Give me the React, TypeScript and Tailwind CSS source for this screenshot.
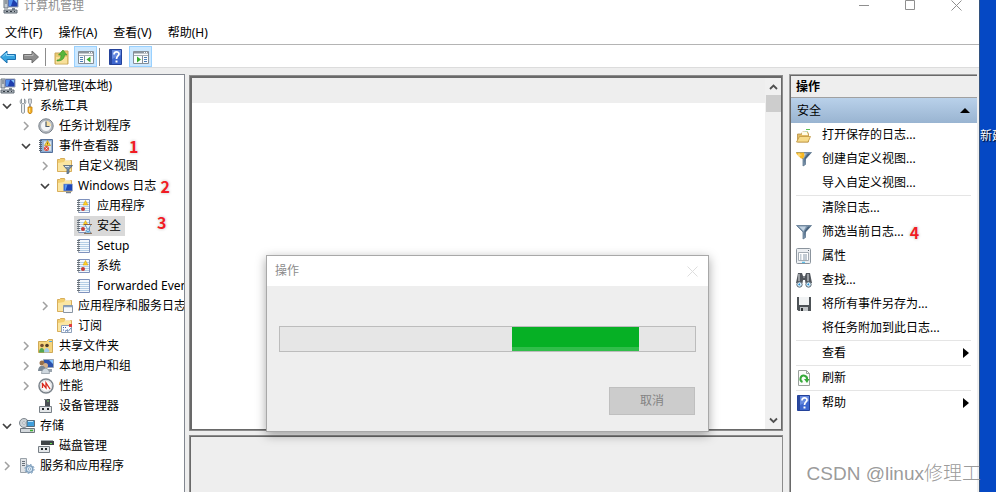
import type { ReactNode } from "react";
import clsx from "clsx";

function Icon({ children, size = 16 }: { children: ReactNode; size?: number }) {
  return (
    <svg width={size} height={size} viewBox="0 0 16 16" fill="none" className="shrink-0" aria-hidden="true">
      {children}
    </svg>
  );
}

function ComputerIcon() {
  return (
    <Icon>
      <path d="M1 1h4v9H1z" fill="#c9ced3" stroke="#6c7680" />
      <path d="M2 3h2M2 5h2" stroke="#5b656f" />
      <path d="M5 1h10v8H5z" fill="#1f3fae" stroke="#9aa6b4" />
      <path d="M6 2h4L8 8H6z" fill="#4f8ff0" />
      <path d="M11 2h3v3z" fill="#86c5ff" />
      <path d="M9 10h3v2H9z" fill="#7c8894" />
      <path d="M1 12h13v3H1z" fill="#aab1b8" stroke="#626c76" />
      <path d="M3 13.500h2M7 13.500h2M11 13.500h1" stroke="#333c45" />
    </Icon>
  );
}

function ToolsIcon() {
  return (
    <Icon>
      <path
        d="M2.500 1v4l1.500 1 1.500-1V1C7 2 7.500 4.500 5.500 6.500v8c-.5 1-2.500 1-3 0v-8C.5 4.500 1 2 2.500 1z"
        fill="#eceff1"
        stroke="#858c93"
        strokeWidth=".9"
      />
      <path d="M9.500 1h3v4l-1 1v3h-1V6l-1-1z" fill="#d5d9dd" stroke="#8b9299" strokeWidth=".8" />
      <path d="M9 9h4v5l-1 1.500h-2L9 14z" fill="#f4b32b" stroke="#c27d0e" strokeWidth=".8" />
      <path d="M10.500 10v4" stroke="#ffe08a" />
    </Icon>
  );
}

function ClockIcon() {
  return (
    <Icon>
      <circle cx="8" cy="8" r="7.200" fill="#b9bec4" stroke="#777f88" />
      <circle cx="8" cy="8" r="5.500" fill="#f4f6f8" stroke="#969ea6" strokeWidth=".6" />
      <path d="M8 8V3a5 5 0 0 1 5 5z" fill="#f7dfa4" />
      <path d="M8 3.500V8.500h3.500" stroke="#4a5a6c" strokeWidth="1.200" />
    </Icon>
  );
}

function NotebookIcon() {
  return (
    <Icon>
      <path d="M2.500 1.500h12v13h-12z" fill="#8fb0d6" stroke="#54709a" />
      <path d="M5.500 3h8v10h-8z" fill="#dbe7f3" stroke="#8ea7c6" strokeWidth=".6" />
      <path d="M1 2.500h3M1 4.500h3M1 6.500h3M1 8.500h3M1 10.500h3M1 12.500h3" stroke="#59636e" />
      <path d="M9.500 2.500l3 5h-6z" fill="#ffd338" stroke="#b98a10" strokeWidth=".6" />
      <path d="M9.500 4.500v2" stroke="#5a4408" strokeWidth=".8" />
      <circle cx="8.500" cy="10.500" r="2.500" fill="#dd4a3e" />
      <path d="M7.500 9.500l2 2M9.500 9.500l-2 2" stroke="#fff" strokeWidth=".7" />
    </Icon>
  );
}

function FolderBase() {
  return (
    <>
      <path d="M.5 13.500v-12h2l1-1h4l1 2h6v11z" fill="#f3cf70" stroke="#cfa044" strokeWidth=".8" />
      <path d="M1 13V5l6-1 1-1.500h6V13z" fill="#fbe6a2" />
      <path d="M8 2h5" stroke="#fff" />
    </>
  );
}

function FolderFilterIcon() {
  return (
    <Icon>
      <FolderBase />
      <path d="M6.500 7.500h9l-3.500 4v3.500l-2 1v-4.500z" fill="#7b93ac" stroke="#44586e" strokeWidth=".7" />
      <path d="M8 8.500h4" stroke="#dce7f2" />
    </Icon>
  );
}

function FolderMonitorIcon() {
  return (
    <Icon>
      <FolderBase />
      <path d="M6.500 6h9v7h-9z" fill="#1d46b8" stroke="#a6b3c4" strokeWidth=".7" />
      <path d="M7.500 6.500h3l-2 6h-1z" fill="#5b9bf2" />
      <path d="M9 14.500h5" stroke="#76818c" strokeWidth="1.500" />
    </Icon>
  );
}

function FolderWindowIcon() {
  return (
    <Icon>
      <FolderBase />
      <path d="M6.500 7.500h9v7h-9z" fill="#f6f8fa" stroke="#8995a3" />
      <path d="M6.500 8.500h9" stroke="#8aa4c2" strokeWidth="1.500" />
    </Icon>
  );
}

function SubscriptionIcon() {
  return (
    <Icon>
      <FolderBase />
      <path d="M4.500 7.500h10v7h-10z" fill="#fafcff" stroke="#8ea0b8" />
      <path d="M6 9.500h1M8 9.500h1M6 12h1M8 13h1M10 12h1" stroke="#3d62a8" />
      <path d="M12 6h3v3h-3z" fill="#e03e3e" />
      <path d="M9 12l2 1.500L14 10" stroke="#4d6e9a" strokeWidth=".8" />
    </Icon>
  );
}

function LogIcon({ marks, busy }: { marks?: boolean; busy?: boolean }) {
  return (
    <Icon>
      <path d="M2.500 1.500h11v13h-11z" fill="#f4f8fd" stroke="#7f92bd" />
      <path d="M4 4.500h9M4 6.500h9M4 8.500h9M4 10.500h9M4 12.500h9" stroke="#a3c3e0" strokeWidth=".8" />
      <path d="M2.500 1v14" stroke="#a3abb3" />
      <path d="M1 2.500h3M1 4.500h3M1 6.500h3M1 8.500h3M1 10.500h3M1 12.500h3" stroke="#69727c" />
      {marks && <path d="M9.500 2.500l2.500 4.500H7z" fill="#ffd029" stroke="#d19a0a" strokeWidth=".5" />}
      {marks && <circle cx="7" cy="11" r="2" fill="#c63b36" />}
      {busy && (
        <>
          <path d="M9 6.500h6l-2.500 4.500L15 15.500H9l2.500-4.500z" fill="#e5f5ff" stroke="#4b86b8" strokeWidth=".8" />
          <path d="M8 6.500h8M8 15.300h8" stroke="#8b6446" />
          <path d="M10 14.500l2-2 2 2z" fill="#459bdc" />
        </>
      )}
    </Icon>
  );
}

function SharedIcon() {
  return (
    <Icon>
      <path d="M.5 14.500v-11h8l2-2h4v13z" fill="#f5d57d" stroke="#caa14b" strokeWidth=".9" />
      <path d="M11 3.500h3" stroke="#4fa7df" />
      <circle cx="4" cy="7.500" r="1.800" fill="#765030" />
      <circle cx="9" cy="7.500" r="1.800" fill="#4f3a28" />
      <path d="M1 14.500c0-6 5.500-6 5.500 0z" fill="#53a653" />
      <path d="M6 14.500c0-6 5.500-6 5.500 0z" fill="#a2cce9" />
    </Icon>
  );
}

function UsersIcon() {
  return (
    <Icon>
      <path d="M5.500 1.500h10v8h-10z" fill="#2b52ad" stroke="#9aa6b4" />
      <path d="M11 2h4v4z" fill="#86c5ff" />
      <path d="M9 11h5v3H9z" fill="#9aa4ae" />
      <circle cx="4" cy="5" r="2.500" fill="#98704a" />
      <circle cx="7.500" cy="7.500" r="2.500" fill="#d6b18a" />
      <path d="M0 13c0-7 8-7 8 0z" fill="#7b8894" />
      <path d="M3.500 15.500c0-7 8-7 8 0z" fill="#cfd8df" stroke="#75818c" strokeWidth=".6" />
    </Icon>
  );
}

function PerformanceIcon() {
  return (
    <Icon>
      <circle cx="8" cy="8" r="7" fill="#fdfdfd" stroke="#7b838b" strokeWidth="1.500" />
      <circle cx="8" cy="8" r="5.500" stroke="#c5cace" strokeWidth=".7" />
      <path d="M4.500 5v5M4 5l4 5V5l4 6" stroke="#d92b20" strokeWidth="1.300" />
    </Icon>
  );
}

function DeviceIcon() {
  return (
    <Icon>
      <path d="M7 1h5v9H7z" fill="#4a4f54" />
      <path d="M9 3h2" stroke="#7bd66f" />
      <path d="M1.500 8.500h12v6h-12z" fill="#e4e7e9" stroke="#777f86" />
      <path d="M4 10h2v2H4zM9 10h2v2H9z" fill="#22272b" />
      <path d="M6 1.500h3" stroke="#7b8288" />
    </Icon>
  );
}

function StorageIcon() {
  return (
    <Icon>
      <circle cx="5" cy="5" r="4.500" fill="#cdd3d8" stroke="#7e868e" />
      <circle cx="5" cy="5" r="1.300" fill="#fff" stroke="#8a929a" strokeWidth=".6" />
      <path d="M8 2.500h7.500v6H8z" fill="#3f9edb" stroke="#5b6c7a" />
      <path d="M9 3.500h5" stroke="#b5e2ff" />
      <path d="M1.500 10.500h14v4h-14z" fill="#d3d8dc" stroke="#6e767e" />
      <path d="M11 12.500h3" stroke="#38b02e" strokeWidth="1.500" />
    </Icon>
  );
}

function DiskIcon() {
  return (
    <Icon>
      <path d="M3 3h13v4H3z" fill="#3f4448" />
      <path d="M3 2.500h12" stroke="#a3aaaf" />
      <path d="M12 5.500h2" stroke="#5fe14d" />
      <path d="M.5 8.500h11v6H.5z" fill="#e4e7e9" stroke="#777f86" />
      <path d="M3 10h2v2H3zM7 10h2v2H7z" fill="#22272b" />
    </Icon>
  );
}

function ServicesIcon() {
  return (
    <Icon>
      <path d="M1.500.5h6v14h-6z" fill="#e0e3e6" stroke="#9aa2a9" />
      <path d="M3 3.500h3M3 5.500h3M3 7.500h3" stroke="#68717a" />
      <circle cx="10.500" cy="11" r="3.300" fill="#dcebf6" stroke="#7f9fbd" strokeWidth="1.500" />
      <circle cx="10.500" cy="11" r="4.600" stroke="#7f9fbd" strokeDasharray="1.800 1.800" />
      <circle cx="10.500" cy="11" r="1.200" fill="#fff" stroke="#7f9fbd" strokeWidth=".8" />
    </Icon>
  );
}

function HelpIcon() {
  return (
    <svg width="16" height="18" viewBox="0 0 16 18" className="shrink-0" aria-hidden="true">
      <path d="M1.500 1.500h12v15h-12z" fill="#3d66ce" stroke="#24429a" />
      <path d="M2 2h2v14H2z" fill="#2a489e" />
      <path d="M4 2h9v5L4 11z" fill="#6589df" />
      <path d="M6 6.500c0-3.500 5-3.500 5-.5 0 2-2.500 2-2.500 5" fill="none" stroke="#fff" strokeWidth="1.700" />
      <path d="M7.500 12.500h2v2h-2z" fill="#fff" />
    </svg>
  );
}

function OpenFolderIcon() {
  return (
    <Icon>
      <path d="M1.500 15V7h4l1-2h5l1 2v8z" fill="#e3bd66" stroke="#b99245" strokeWidth=".8" />
      <path d="M6 5h5l1 3H6z" fill="#fffbe6" />
      <path d="M.5 15l3-5.500h11L12 15z" fill="#f7db8a" stroke="#c09742" strokeWidth=".8" />
      <path d="M10 2.500h4" stroke="#5abf52" />
      <path d="M9 4.500h3" stroke="#b9dcb4" />
    </Icon>
  );
}

function FunnelIcon({ isNew }: { isNew?: boolean }) {
  return (
    <Icon>
      <path d="M.5 1.500h15L9.500 8v5.500l-2.500 1.500V8z" fill="#7d96ae" stroke="#5f7890" strokeWidth=".8" />
      <path d="M3 2.500h7L7.500 7z" fill="#c3d3e2" />
      <path d="M9.500 8L14.500 2.500H12L8.500 7v6" fill="#48627c" />
      {isNew && <path d="M0 1.500h8L8.500 5 7 7.500H5L.5 3z" fill="#f8b922" />}
      {isNew && <path d="M3 2v4M1.500 4h4" stroke="#ffe9a6" strokeWidth=".8" />}
    </Icon>
  );
}

function PropertiesIcon() {
  return (
    <Icon>
      <rect x=".5" y=".5" width="14" height="15" rx="1" fill="#eceff2" stroke="#8b949d" />
      <path d="M12 2.500h1" stroke="#5e6871" />
      <path d="M2.500 4.500h10v8h-10z" fill="#fff" stroke="#a4acb4" />
      <path d="M4 7h1.500M4 9h1.500M4 11h1.500M7 7h4M7 9h4M7 11h4" stroke="#8698a9" />
      <path d="M6 14.300h3" stroke="#39b3e6" />
    </Icon>
  );
}

function BinocularsIcon() {
  return (
    <Icon>
      <path d="M2 1h4l1 3h2l1-3h4l2 10H9.500L9 8H7l-.5 3H0z" fill="#51565c" />
      <path d="M3 2v7M12 2v7" stroke="#c0c5ca" strokeWidth="1.300" />
      <path d="M7 5h2" stroke="#b4b9be" />
      <circle cx="3.500" cy="12.500" r="2.700" fill="#d9f0ff" stroke="#5b6770" />
      <circle cx="12.500" cy="12.500" r="2.700" fill="#d9f0ff" stroke="#5b6770" />
      <path d="M2 13l1.500-2 1 2.500zM11 13l1.500-2 1 2.500z" fill="#258ed2" />
    </Icon>
  );
}

function FloppyIcon() {
  return (
    <Icon>
      <path d="M1 1h14v14H2.500L1 13.500z" fill="#4d5256" />
      <path d="M3 1h10v8H3z" fill="#f1f3f4" />
      <path d="M4 11h8v4H4z" fill="#c0c4c7" />
      <path d="M5 12h2v3H5z" fill="#2c3033" />
    </Icon>
  );
}

function RefreshIcon() {
  return (
    <Icon>
      <path d="M2.500.5h8l3 3v12h-11z" fill="#fbfcfb" stroke="#9aa19c" />
      <path d="M10.500.5v3h3" stroke="#9aa19c" />
      <path d="M6.500 12A3.300 3.300 0 1 1 11 9.500" stroke="#36a93a" strokeWidth="2" />
      <path d="M8 9h5.500L11 13z" fill="#36a93a" />
    </Icon>
  );
}

function NavArrow({ back }: { back?: boolean }) {
  return (
    <svg width="16" height="16" viewBox="0 0 16 16" aria-hidden="true">
      {back ? (
        <path d="M.5 8L7 2v3.500h8.500v5H7V14z" fill="#38a5e0" stroke="#1b6fae" />
      ) : (
        <path d="M15.500 8L9 2v3.500H.5v5H9V14z" fill="#8d8d8d" stroke="#6d6d6d" />
      )}
      <path
        d={back ? "M3 7.500L6.500 4v2.500H14" : "M1.500 6.500H10V4.500"}
        fill="none"
        stroke={back ? "#8fd8fa" : "#b9b9b9"}
      />
    </svg>
  );
}

function UpFolderIcon() {
  return (
    <Icon>
      <path d="M1 15V4h6l1-2h6v13z" fill="#eccb72" stroke="#c9a85a" />
      <path d="M2 14.500V8h11v6.500z" fill="#f8e09a" />
      <path d="M3 11c3 0 4-2 4-5H4.500L9 1l4 5h-2.500c0 4-3 6-7.500 6z" fill="#57b63c" stroke="#38902a" strokeWidth=".6" />
    </Icon>
  );
}

function PaneIcon({ right }: { right?: boolean }) {
  return (
    <Icon>
      <path d="M.5 2.500h15v12H.5z" fill="#fbfcfd" stroke="#858d96" />
      <path d="M1 3.500h14" stroke="#8b949d" strokeWidth="2" />
      <path d="M11 3.500h1M13 3.500h1" stroke="#fff" />
      <path d="M1 6.500h14" stroke="#a5adb5" />
      <path d={right ? "M9.500 7v8" : "M6.500 7v8"} stroke="#858d96" />
      <path d={right ? "M11 8.500h3M11 10.500h3M11 12.500h3" : "M2 8.500h3M2 10.500h3M2 12.500h3"} stroke="#4d7eb5" />
      <path d={right ? "M4 7.500v6l4-3z" : "M12.500 7.500v6l-4-3z"} fill="#35ad2c" />
    </Icon>
  );
}

function Chevron({ open }: { open?: boolean }) {
  return (
    <svg width="10" height="10" viewBox="0 0 10 10" fill="none" aria-hidden="true">
      {open ? (
        <path d="M1 3l4 4 4-4" stroke="#404040" strokeWidth="1.700" />
      ) : (
        <path d="M3 1l4 4-4 4" stroke="#a0a0a0" strokeWidth="1.500" />
      )}
    </svg>
  );
}

function CloseGlyph() {
  return (
    <svg width="11" height="11" viewBox="0 0 11 11" fill="none" stroke="currentColor" aria-hidden="true">
      <path d="M.5.5l10 10M10.500.5l-10 10" />
    </svg>
  );
}

// red step number drawn next to an item
function Step({ n, className }: { n: number; className?: string }) {
  return (
    <span
      className={clsx(
        "font-['Noto_Sans_CJK_SC',sans-serif] text-base font-bold text-[#f01c24] [text-shadow:0_0_2px_#fff,0_0_3px_#aaa]",
        className,
      )}
    >
      {n}
    </span>
  );
}

interface TreeNode {
  label: string;
  level: number;
  icon: ReactNode;
  open?: boolean;
  selected?: boolean;
  step?: ReactNode;
}

const indents = ["pl-0", "pl-0", "pl-[19px]", "pl-[38px]", "pl-[57px]"];

const tree: TreeNode[] = [
  { label: "计算机管理(本地)", level: 0, icon: <ComputerIcon /> },
  { label: "系统工具", level: 1, icon: <ToolsIcon />, open: true },
  { label: "任务计划程序", level: 2, icon: <ClockIcon />, open: false },
  { label: "事件查看器", level: 2, icon: <NotebookIcon />, open: true, step: <Step n={1} className="ml-1.5" /> },
  { label: "自定义视图", level: 3, icon: <FolderFilterIcon />, open: false },
  { label: "Windows 日志", level: 3, icon: <FolderMonitorIcon />, open: true, step: <Step n={2} /> },
  { label: "应用程序", level: 4, icon: <LogIcon marks /> },
  { label: "安全", level: 4, icon: <LogIcon marks busy />, selected: true, step: <Step n={3} className="mb-2 ml-8" /> },
  { label: "Setup", level: 4, icon: <LogIcon /> },
  { label: "系统", level: 4, icon: <LogIcon marks /> },
  { label: "Forwarded Events", level: 4, icon: <LogIcon /> },
  { label: "应用程序和服务日志", level: 3, icon: <FolderWindowIcon />, open: false },
  { label: "订阅", level: 3, icon: <SubscriptionIcon /> },
  { label: "共享文件夹", level: 2, icon: <SharedIcon />, open: false },
  { label: "本地用户和组", level: 2, icon: <UsersIcon />, open: false },
  { label: "性能", level: 2, icon: <PerformanceIcon />, open: false },
  { label: "设备管理器", level: 2, icon: <DeviceIcon /> },
  { label: "存储", level: 1, icon: <StorageIcon />, open: true },
  { label: "磁盘管理", level: 2, icon: <DiskIcon /> },
  { label: "服务和应用程序", level: 1, icon: <ServicesIcon />, open: false },
];

function TreeRow({ node }: { node: TreeNode }) {
  return (
    <li className={clsx("flex h-5 items-center whitespace-nowrap", indents[node.level])}>
      {node.level > 0 && (
        <span className="w-[17px] shrink-0 pl-0.5">{node.open !== undefined && <Chevron open={node.open} />}</span>
      )}
      <span
        className={clsx(
          "flex h-5 items-center gap-[5px] pr-1",
          node.level > 0 && "pl-0.5",
          node.selected && "bg-[#d9d9d9]",
        )}
      >
        {node.icon}
        {node.label}
      </span>
      {node.step}
    </li>
  );
}

interface Action {
  label: string;
  icon?: ReactNode;
  submenu?: boolean;
  step?: number;
}

const actionGroups: Action[][] = [
  [
    { label: "打开保存的日志...", icon: <OpenFolderIcon /> },
    { label: "创建自定义视图...", icon: <FunnelIcon isNew /> },
    { label: "导入自定义视图..." },
  ],
  [
    { label: "清除日志..." },
    { label: "筛选当前日志...", icon: <FunnelIcon />, step: 4 },
    { label: "属性", icon: <PropertiesIcon /> },
    { label: "查找...", icon: <BinocularsIcon /> },
    { label: "将所有事件另存为...", icon: <FloppyIcon /> },
    { label: "将任务附加到此日志..." },
  ],
  [{ label: "查看", submenu: true }],
  [{ label: "刷新", icon: <RefreshIcon /> }],
  [{ label: "帮助", icon: <HelpIcon />, submenu: true }],
];

function ActionRow({ action }: { action: Action }) {
  return (
    <button type="button" className="flex h-6 w-full items-center text-left whitespace-nowrap">
      <span className="w-[26px] shrink-0">{action.icon}</span>
      {action.label}
      {action.step && <Step n={action.step} className="ml-1.5" />}
      {action.submenu && (
        <svg width="6" height="10" viewBox="0 0 6 10" className="mr-0.5 ml-auto" aria-hidden="true">
          <path d="M0 0v10l6-5z" fill="#000" />
        </svg>
      )}
    </button>
  );
}

function ActionsPane() {
  return (
    <aside className="mr-0.5 flex w-[188px] shrink-0 flex-col border-t border-l border-[#a0a0a0]">
      <div className="flex flex-1 flex-col border-t border-l border-[#696969] bg-white">
        <h2 className="h-[22px] border-b border-[#a0a0a0] bg-[#eee] pl-[5px] leading-[22px] font-bold">操作</h2>
        <div className="flex h-[25px] items-center justify-between bg-linear-to-b from-[#b9d1ea] to-[#99b4d1] pr-[7px] pl-1.5">
          安全
          <svg width="10" height="5" viewBox="0 0 10 5" aria-hidden="true">
            <path d="M0 5h10L5 0z" fill="#000" />
          </svg>
        </div>
        <div className="divide-y divide-[#e5e5e5] pr-1.5 pl-[5px]">
          {actionGroups.map((group, i) => (
            <div key={i}>
              {group.map((action) => (
                <ActionRow key={action.label} action={action} />
              ))}
            </div>
          ))}
        </div>
      </div>
    </aside>
  );
}

function ScrollBar() {
  return (
    <div className="flex w-4 shrink-0 flex-col items-center bg-[#f0f0f0]">
      <svg width="9" height="17" viewBox="0 0 9 17" fill="none" className="shrink-0" aria-hidden="true">
        <path d="M1 11l3.500-3.500L8 11" stroke="#505050" strokeWidth="1.800" />
      </svg>
      <div className="h-[17px] w-[15px] bg-[#cdcdcd]" />
      <svg width="9" height="17" viewBox="0 0 9 17" fill="none" className="mt-auto shrink-0" aria-hidden="true">
        <path d="M1 6.500L4.500 10 8 6.500" stroke="#505050" strokeWidth="1.800" />
      </svg>
    </div>
  );
}

function ProgressDialog() {
  const start = 56;
  const size = 30.6;

  return (
    <div
      role="dialog"
      aria-label="操作"
      className="absolute top-[255px] left-[266px] w-[443px] border border-[#a8a8a8] bg-[#eee] shadow-[0_3px_10px_rgba(0,0,0,0.35)]"
    >
      <div className="flex h-[30px] items-center justify-between bg-white pr-2.5 pl-2 text-[#8c8c8c]">
        操作
        <button type="button" aria-label="关闭" className="text-[#dedede]">
          <CloseGlyph />
        </button>
      </div>
      <div className="px-3 pt-10 pb-4">
        <div role="progressbar" aria-label="操作" className="relative h-[26px] border border-[#bcbcbc] bg-[#e6e6e6]">
          <div
            className="absolute inset-y-0 border-b-4 border-[#30be4a] bg-[#06b025]"
            style={{ left: `${start}%`, width: `${size}%` }}
          />
        </div>
        <button
          type="button"
          className="mt-[35px] mr-px ml-auto block h-7 w-[86px] border border-[#bfbfbf] bg-[#ccc] text-[#838383]"
        >
          取消
        </button>
      </div>
    </div>
  );
}

export default function App() {
  return (
    <div className="flex h-screen overflow-hidden bg-[#0548c4] font-['Noto_Sans','Noto_Sans_CJK_SC',sans-serif] text-xs text-black">
      <div className="relative flex min-w-0 flex-1 flex-col border-r border-[#33527f] bg-white">
        <header className="flex h-5 items-start justify-between pr-[17px] pl-[3px] leading-3 text-[#8f8f8f]">
          <div className="flex h-3 items-center gap-[5px]">
            <ComputerIcon />
            计算机管理
          </div>
          <div className="flex items-start gap-[35px]">
            <button type="button" aria-label="最小化">
              <svg width="11" height="11" viewBox="0 0 11 11" stroke="currentColor" aria-hidden="true">
                <path d="M0 5.500h10" />
              </svg>
            </button>
            <button type="button" aria-label="最大化">
              <svg width="11" height="11" viewBox="0 0 11 11" fill="none" stroke="currentColor" aria-hidden="true">
                <path d="M.5.5h9v9h-9z" />
              </svg>
            </button>
            <button type="button" aria-label="关闭">
              <CloseGlyph />
            </button>
          </div>
        </header>

        <nav className="flex h-[25px] items-center gap-4 border-b border-[#b4b4b4] pt-0.5 pl-[5px]">
          <button type="button">文件(F)</button>
          <button type="button">操作(A)</button>
          <button type="button">查看(V)</button>
          <button type="button">帮助(H)</button>
        </nav>

        <div className="flex h-[23px] items-center border-b border-[#dcdcdc] pt-px">
          <button type="button" aria-label="后退">
            <NavArrow back />
          </button>
          <button type="button" aria-label="前进" className="ml-[7px]">
            <NavArrow />
          </button>
          <span className="mx-1.5 h-[18px] w-px bg-[#8c8c8c]" />
          <button type="button" aria-label="上一级" className="ml-0.5">
            <UpFolderIcon />
          </button>
          <button
            type="button"
            aria-label="显示/隐藏控制台树"
            className="ml-1 flex h-[21px] w-[23px] items-center justify-center border border-[#99d1ff] bg-[#cce8ff]"
          >
            <PaneIcon />
          </button>
          <span className="mx-0.5 h-[18px] w-px bg-[#8c8c8c]" />
          <button type="button" aria-label="帮助" className="mr-[5px] ml-1.5">
            <HelpIcon />
          </button>
          <button
            type="button"
            aria-label="显示/隐藏操作窗格"
            className="flex h-[21px] w-[23px] items-center justify-center border border-[#99d1ff] bg-[#cce8ff]"
          >
            <PaneIcon right />
          </button>
        </div>

        <main className="flex min-h-0 flex-1 bg-[#eee] pt-1.5">
          <ul className="w-[185px] shrink-0 overflow-hidden border-t border-r border-[#828790] bg-white pt-px">
            {tree.map((node) => (
              <TreeRow key={node.label} node={node} />
            ))}
          </ul>

          <div className="mr-1.5 ml-1 flex min-w-0 flex-1 flex-col gap-1 pt-px">
            <section className="flex min-h-0 flex-1 border border-[#8c8c8c]">
              <div className="flex flex-1 border-2 border-r border-b border-[#696969] bg-white">
                <div className="flex-1">
                  <div className="h-[25px] bg-[#eee]" />
                </div>
                <ScrollBar />
              </div>
            </section>
            <section className="flex h-[57px] shrink-0 border border-b-0 border-[#8c8c8c]">
              <div className="flex-1 border-t border-l border-[#696969] bg-[#eee]" />
            </section>
          </div>

          <ActionsPane />
        </main>

        <ProgressDialog />
      </div>

      <div className="w-4 shrink-0 overflow-hidden pt-[128px] whitespace-nowrap text-white [text-shadow:1px_1px_1px_#000]">
        新建
      </div>

      <div className="absolute right-[15px] bottom-1.5 font-['Liberation_Sans','Noto_Sans_CJK_SC',sans-serif] text-[19px] leading-6 font-light whitespace-nowrap text-[#8e8e8e]/90">
        CSDN @linux修理工
      </div>
    </div>
  );
}
